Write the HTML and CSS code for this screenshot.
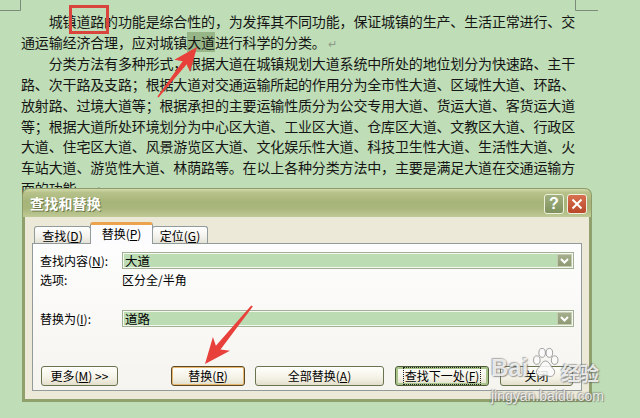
FILE: index.html
```html
<!DOCTYPE html>
<html lang="zh-CN">
<head>
<meta charset="utf-8">
<title>查找和替换</title>
<link rel="stylesheet" href="styles.css">
</head>
<body>
<div class="page">
  <div class="doc">
    <p class="para">
      <span class="line ind">城镇道路的功能是综合性的，为发挥其不同功能，保证城镇的生产、生活正常进行、交</span>
      <span class="line">通运输经济合理，应对城镇<span class="sel">大道</span>进行科学的分类。<span class="ret">↵</span></span>
      <span class="line ind">分类方法有多种形式，根据大道在城镇规划大道系统中所处的地位划分为快速路、主干</span>
      <span class="line">路、次干路及支路；根据大道对交通运输所起的作用分为全市性大道、区域性大道、环路、</span>
      <span class="line">放射路、过境大道等；根据承担的主要运输性质分为公交专用大道、货运大道、客货运大道</span>
      <span class="line">等；根据大道所处环境划分为中心区大道、工业区大道、仓库区大道、文教区大道、行政区</span>
      <span class="line">大道、住宅区大道、风景游览区大道、文化娱乐性大道、科技卫生性大道、生活性大道、火</span>
      <span class="line">车站大道、游览性大道、林荫路等。在以上各种分类方法中，主要是满足大道在交通运输方</span>
      <span class="line">面的功能。<span class="ret">↵</span></span>
    </p>
  </div>

  <div class="dialog">
    <div class="titlebar">
      <span class="title">查找和替换</span>
      <div class="tb-btns">
        <span class="tb-btn help">?</span>
        <span class="tb-btn close"><svg width="12" height="12" viewBox="0 0 12 12"><path d="M1.5 1.5L10.5 10.5M10.5 1.5L1.5 10.5" stroke="#fff" stroke-width="2" fill="none"/></svg></span>
      </div>
    </div>
    <div class="dbody">
      <div class="tabs">
        <div class="tab t1">查找(<u>D</u>)</div>
        <div class="tab t2 active">替换(<u>P</u>)</div>
        <div class="tab t3">定位(<u>G</u>)</div>
      </div>
      <div class="panel">
        <div class="row">
          <span class="lbl">查找内容(<u>N</u>):</span>
          <div class="combo"><span class="val">大道</span><span class="drop"><svg width="9" height="6" viewBox="0 0 9 6"><path d="M1 1L4.5 4.5L8 1" stroke="#fff" stroke-width="2" fill="none"/></svg></span></div>
        </div>
        <div class="row opt">
          <span class="lbl">选项:</span>
          <span class="optval">区分全/半角</span>
        </div>
        <div class="row r3">
          <span class="lbl">替换为(<u>I</u>):</span>
          <div class="combo"><span class="val">道路</span><span class="drop"><svg width="9" height="6" viewBox="0 0 9 6"><path d="M1 1L4.5 4.5L8 1" stroke="#fff" stroke-width="2" fill="none"/></svg></span></div>
        </div>
        <div class="btnrow">
          <button class="btn b-more">更多(<u>M</u>) &gt;&gt;</button>
          <button class="btn b-rep default">替换(<u>R</u>)</button>
          <button class="btn b-all">全部替换(<u>A</u>)</button>
          <button class="btn b-next focus"><span class="focusbox">查找下一处(<u>F</u>)</span></button>
          <button class="btn b-close">关闭</button>
        </div>
      </div>
    </div>
  </div>

  <svg class="overlay" width="640" height="418" viewBox="0 0 640 418">
    <path d="M0 10.5H20.5V0" stroke="#7d8c7a" fill="none"/>
    <path d="M598 10.5H575.5V0" stroke="#7d8c7a" fill="none"/>
    <rect x="70.5" y="6.5" width="37" height="26" fill="none" stroke="#d9443c" stroke-width="3"/>
    <polygon points="197,47 190.1,72.05 186.7,64.3 158.6,97.5 157.4,96.5 182.7,61.3 174.3,59.75" fill="#e8413c"/>
    <polygon points="205,364 229.9,350.7 220.5,349.6 252.8,306.6 251.2,305.4 215.9,345.8 212.9,336.9" fill="#e8413c"/>
  </svg>

  <div class="wm">
    <div class="wm-logo">
      <span class="wm-bai">Bai</span>
      <svg class="paw" width="27" height="32" viewBox="0 0 28 32">
        <g fill="rgba(250,250,250,0.85)" stroke="rgba(120,120,120,0.7)" stroke-width="1">
          <ellipse cx="5" cy="13" rx="3.4" ry="4.4"/>
          <ellipse cx="10.5" cy="5.5" rx="3.4" ry="4.6"/>
          <ellipse cx="18" cy="5.5" rx="3.4" ry="4.6"/>
          <ellipse cx="23.5" cy="13" rx="3.4" ry="4.4"/>
          <path d="M14 14c-4 0-5 5-8 8-3 3-1 8 3 8 2 0 3-1 5-1s3 1 5 1c4 0 6-5 3-8-3-3-4-8-8-8z"/>
        </g>
      </svg>
      <span class="wm-jy">经验</span>
    </div>
    <div class="wm-url">jingyan.baidu.com</div>
  </div>
</div>
</body>
</html>
```

FILE: styles.css
```css
html, body {
  margin: 0;
  padding: 0;
}
body {
  background: #bfddb6;
  font-family: "Noto Sans CJK SC", "Noto Sans", sans-serif;
}
.page {
  position: relative;
  width: 640px;
  height: 418px;
  overflow: hidden;
  background: #bfddb6;
}

/* document text */
.doc {
  padding: 11px 0 0 21px;
}
.para {
  margin: 0;
  font-size: 14px;
  line-height: 20.7px;
  letter-spacing: -0.15px;
  color: #151515;
}
.line {
  display: block;
  white-space: nowrap;
}
.ind {
  padding-left: 27.7px;
}
.sel {
  background: #97b688;
}
.ret {
  color: #8b9a88;
  font-size: 11px;
  margin-left: 2px;
}

/* dialog window */
.dialog {
  position: absolute;
  z-index: 1;
  left: 22px;
  top: 188px;
  width: 570px;
  height: 214px;
  display: flex;
  flex-direction: column;
  font-size: 12px;
  color: #000;
}
.titlebar {
  height: 29px;
  box-sizing: border-box;
  border-radius: 7px 7px 0 0;
  background: linear-gradient(#d3dbad 0%, #b7c38b 12%, #a7b479 45%, #a9b67c 70%, #bfca96 100%);
  border: 1px solid #8d9c69;
  border-bottom: none;
  display: flex;
  align-items: center;
  justify-content: space-between;
  padding: 0 4px 0 7px;
}
.title {
  color: #fff;
  font-weight: bold;
  font-size: 14px;
  letter-spacing: 0.2px;
  text-shadow: 1px 1px 0 #6b7848;
}
.tb-btns {
  display: flex;
  gap: 3px;
  margin-top: 1px;
}
.tb-btn {
  width: 20px;
  height: 20px;
  box-sizing: border-box;
  border: 1px solid #eef0dc;
  border-radius: 3px;
  display: flex;
  align-items: center;
  justify-content: center;
}
.help {
  background: linear-gradient(#a0b07e, #7f915e);
  color: #fff;
  font-family: "Liberation Sans", sans-serif;
  font-weight: bold;
  font-size: 16px;
}
.close {
  background: linear-gradient(#d77050, #b9482a);
}

.dbody {
  flex: 1;
  display: flex;
  flex-direction: column;
  background: #ece9d8;
  border: 3px solid #8fa06c;
  border-top: none;
  padding: 5px 7px 8px 7px;
}
.tabs {
  display: flex;
  align-items: flex-end;
  height: 22px;
  padding-left: 2px;
  margin-bottom: -1px;
  position: relative;
  z-index: 2;
}
.tab {
  height: 17px;
  box-sizing: border-box;
  border: 1px solid #919b9c;
  border-bottom: none;
  border-radius: 3px 3px 0 0;
  background: linear-gradient(#ffffff, #f3f2ec 60%, #e4e2d6);
  display: flex;
  align-items: center;
  justify-content: center;
  margin-bottom: 1px;
  font-size: 12px;
}
.t1 { width: 57px; }
.t2 { width: 63px; margin-left: -1px; }
.t3 { width: 56px; margin-left: -1px; }
.tab.active {
  height: 22px;
  margin-bottom: 0;
  background: #fcfcfe;
  border-top: 3px solid #eda34e;
  padding-bottom: 2px;
  position: relative;
  z-index: 2;
}
.panel {
  flex: 1;
  position: relative;
  z-index: 1;
  background: linear-gradient(#fdfdfd, #f5f4ef);
  border: 1px solid #919b9c;
  padding: 8px 7px 0 7px;
  display: flex;
  flex-direction: column;
}
.row {
  display: flex;
  align-items: center;
  height: 17px;
}
.lbl {
  width: 82px;
  flex: none;
}
.combo {
  flex: 1;
  height: 17px;
  box-sizing: border-box;
  border: 1px solid #a2b095;
  box-shadow: inset 0 0 0 1px #f4f8ee;
  background: #bcdcb4;
  display: flex;
  align-items: center;
  justify-content: space-between;
  padding: 0 1px 0 2px;
}
.val {
  font-size: 12.5px;
}
.drop {
  width: 15px;
  height: 13px;
  box-sizing: border-box;
  background: linear-gradient(#a4ae8c, #8e9a74);
  border: 1px solid #c4cbb2;
  border-radius: 1px;
  display: flex;
  align-items: center;
  justify-content: center;
}
.opt {
  margin-top: 3px;
  height: 15px;
}
.r3 {
  margin-top: 23px;
}
.btnrow {
  display: flex;
  margin-top: 39px;
}
.btn {
  height: 20px;
  box-sizing: border-box;
  border: 1px solid #6a7350;
  border-radius: 3px;
  background: linear-gradient(#fffffb, #f4f2e6 60%, #e2dfcc);
  font-family: "Noto Sans CJK SC", sans-serif;
  font-size: 12px;
  color: #000;
  padding: 0;
  display: flex;
  align-items: center;
  justify-content: center;
  line-height: 1;
}
.b-more { width: 77px; margin-left: 1px; }
.b-rep { width: 74px; margin-left: 53px; }
.b-all { width: 129px; margin-left: 10px; }
.b-next { width: 94px; margin-left: 11px; }
.b-close { width: 73px; margin-left: 11px; }
.btn.default {
  border-color: #5c4a25;
  box-shadow: inset 0 0 0 1px #e8b66e;
}
.btn.focus {
  border-color: #4c5a35;
  box-shadow: inset 0 0 0 2px #a9c48a;
}
.focusbox {
  outline: 1px dotted #222;
  outline-offset: 1px;
  padding: 1px 0;
}

/* annotations */
.overlay {
  position: absolute;
  z-index: 2;
  left: 0;
  top: 0;
  pointer-events: none;
}

/* watermark */
.wm {
  position: absolute;
  z-index: 3;
  left: 491px;
  top: 346px;
  width: 116px;
  color: rgba(250, 250, 250, 0.85);
  text-shadow: 1px 1px 1px rgba(100, 100, 100, 0.55), -1px -1px 1px rgba(100, 100, 100, 0.4), 0 0 2px rgba(90, 90, 90, 0.45);
}
.wm-logo {
  display: flex;
  align-items: flex-end;
  height: 38px;
}
.wm-bai {
  flex: none;
  width: 40px;
  font-family: "Liberation Sans", sans-serif;
  font-weight: bold;
  font-size: 24px;
  line-height: 28px;
  margin-bottom: 2px;
}
.paw {
  flex: none;
  margin: 0 2px 5px 1px;
}
.wm-jy {
  flex: none;
  font-size: 19px;
  line-height: 22px;
  font-weight: bold;
}
.wm-url {
  font-family: "Liberation Sans", sans-serif;
  font-size: 14px;
  line-height: 16px;
  margin-top: 4px;
  white-space: nowrap;
}
```
